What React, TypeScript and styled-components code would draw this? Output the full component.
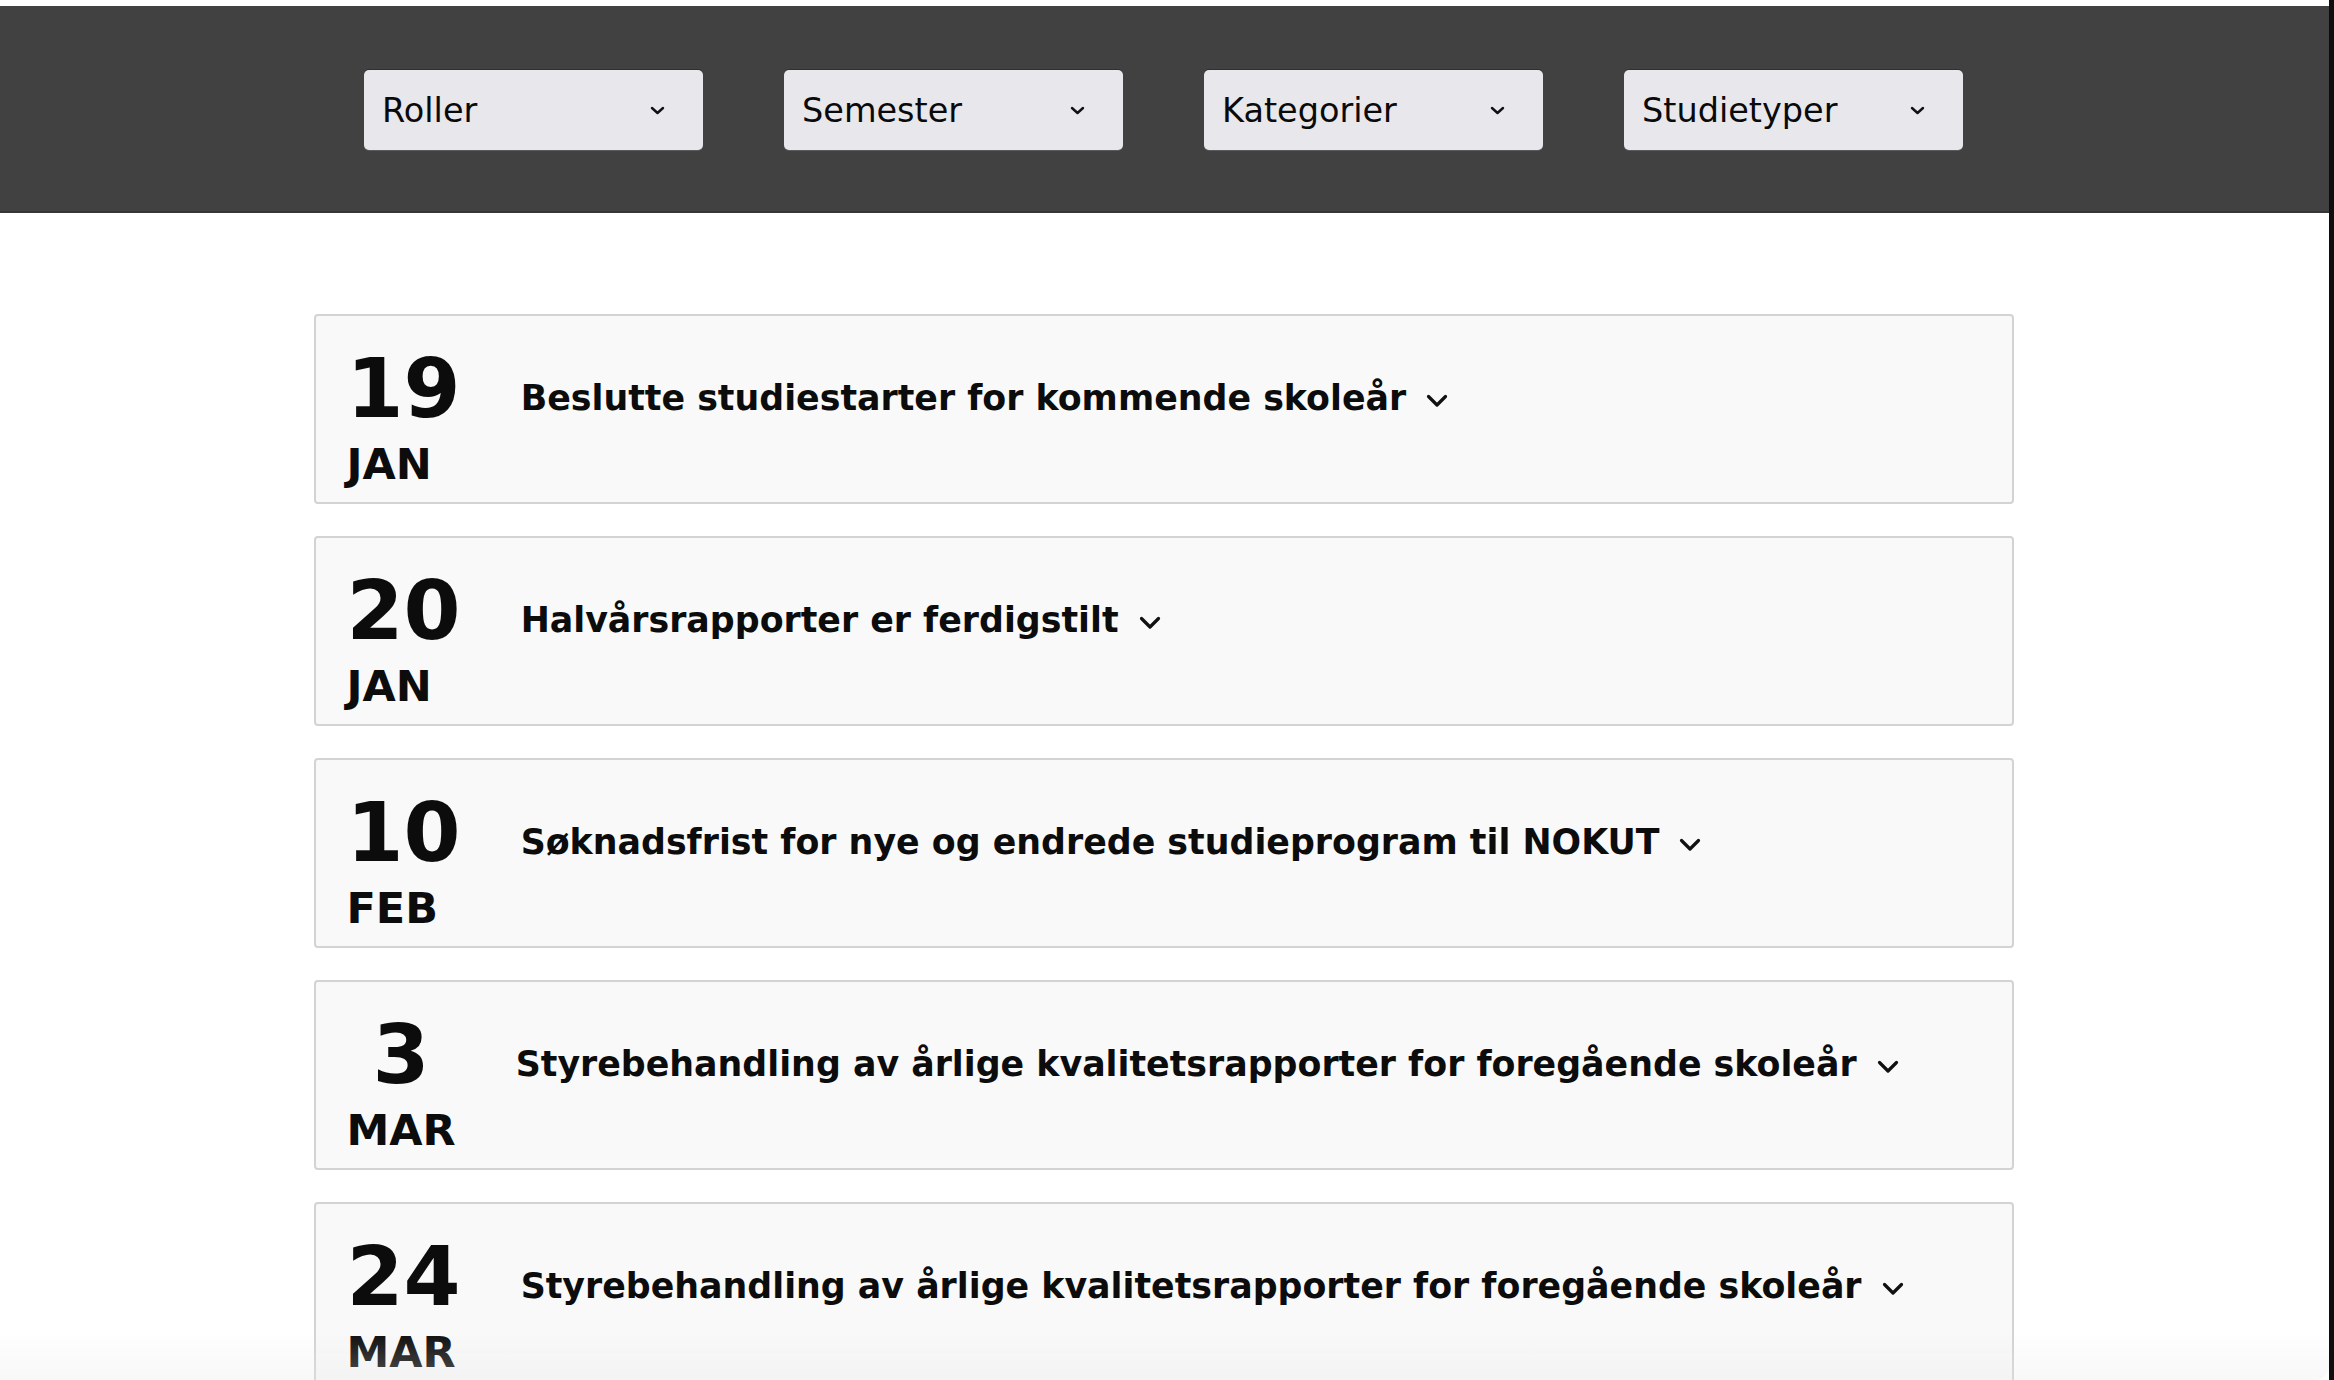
import React from "react";
import styled, { createGlobalStyle } from "styled-components";

const Global = createGlobalStyle`
  html, body {
    margin: 0;
    padding: 0;
    background: #ffffff;
    overflow: hidden;
  }
  body {
    font-family: "DejaVu Sans", Verdana, sans-serif;
    color: #0c0c0c;
  }
`;

const Frame = styled.div`
  min-height: 1380px;
  padding-top: 6px;
  border-right: 5px solid #0e0e0e;
  box-sizing: border-box;
  background: #ffffff;
`;

const FilterBar = styled.header`
  background: #414141;
  border-bottom: 2px solid #363636;
  display: flex;
  justify-content: center;
  gap: 81px;
  padding: 64px 2px 61px 0;
`;

const Dropdown = styled.button`
  width: 339px;
  height: 80px;
  box-sizing: border-box;
  background: #e8e7ec;
  border: none;
  border-radius: 5px;
  box-shadow: 0 -1px 0 #2f2f2f, 0 1px 0 #5a5a5a;
  display: flex;
  align-items: center;
  justify-content: space-between;
  padding: 0 38px 0 18px;
  font-family: "DejaVu Sans", Verdana, sans-serif;
  font-size: 33.5px;
  color: #0a0a0a;
  cursor: pointer;
`;

const SmallChevron = styled.svg`
  width: 15px;
  height: 9px;
  flex: none;
`;

const List = styled.main`
  width: 1700px;
  margin-left: calc(50% - 851px);
  padding-top: 101px;
  display: flex;
  flex-direction: column;
  gap: 32px;
`;

const Card = styled.article`
  background: #f9f9f9;
  border: 2px solid #d3d3d3;
  border-radius: 4px;
  display: flex;
  align-items: flex-start;
  gap: 60px;
  padding: 31px 30px 16px 31px;
  box-sizing: border-box;
  height: 190px;
`;

const DateCol = styled.div`
  display: flex;
  flex-direction: column;
  align-items: stretch;
  font-weight: bold;
`;

const Day = styled.div`
  font-size: 82px;
  line-height: 84px;
  text-align: center;
`;

const Month = styled.div`
  font-size: 43px;
  line-height: 43px;
  margin-top: 12px;
  text-align: left;
`;

const Title = styled.h2`
  margin: 34px 0 0 0;
  font-size: 34.8px;
  line-height: 35px;
  font-weight: bold;
  display: flex;
  align-items: center;
  gap: 20px;
`;

const BigChevron = styled.svg`
  width: 22px;
  height: 14px;
  flex: none;
  margin-top: 4px;
`;

const BottomShade = styled.div`
  position: fixed;
  left: 0;
  right: 5px;
  bottom: 0;
  height: 50px;
  pointer-events: none;
  border-bottom-right-radius: 14px;
  background: linear-gradient(to bottom, rgba(240, 240, 240, 0) 0%, rgba(232, 232, 232, 0.3) 100%);
`;

const filters = ["Roller", "Semester", "Kategorier", "Studietyper"];

const events = [
  { day: "19", month: "JAN", title: "Beslutte studiestarter for kommende skoleår" },
  { day: "20", month: "JAN", title: "Halvårsrapporter er ferdigstilt" },
  { day: "10", month: "FEB", title: "Søknadsfrist for nye og endrede studieprogram til NOKUT" },
  { day: "3", month: "MAR", title: "Styrebehandling av årlige kvalitetsrapporter for foregående skoleår" },
  { day: "24", month: "MAR", title: "Styrebehandling av årlige kvalitetsrapporter for foregående skoleår" },
];

export default function App() {
  return (
    <>
      <Global />
      <Frame>
        <FilterBar>
          {filters.map((f) => (
            <Dropdown key={f} type="button">
              <span>{f}</span>
              <SmallChevron viewBox="0 0 15 9">
                <path d="M2 2 L7.5 7 L13 2" fill="none" stroke="#111" strokeWidth="2.4" strokeLinecap="round" strokeLinejoin="round" />
              </SmallChevron>
            </Dropdown>
          ))}
        </FilterBar>
        <List>
          {events.map((e, i) => (
            <Card key={i}>
              <DateCol>
                <Day>{e.day}</Day>
                <Month>{e.month}</Month>
              </DateCol>
              <Title>
                <span>{e.title}</span>
                <BigChevron viewBox="0 0 22 14">
                  <path d="M2.5 2.5 L11 11 L19.5 2.5" fill="none" stroke="#111" strokeWidth="3.2" strokeLinecap="round" strokeLinejoin="round" />
                </BigChevron>
              </Title>
            </Card>
          ))}
        </List>
      </Frame>
      <BottomShade />
    </>
  );
}
